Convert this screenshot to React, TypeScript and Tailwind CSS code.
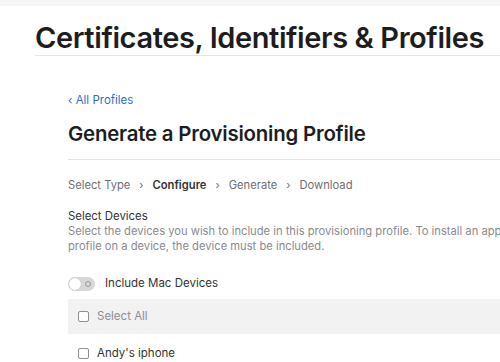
import React, { useState } from "react";

const steps = ["Select Type", "Configure", "Generate", "Download"];

const devices = ["Andy's iphone"];

export default function App() {
  const [includeMac, setIncludeMac] = useState(false);
  const [checked, setChecked] = useState<Record<string, boolean>>({});

  return (
    <div
      className="w-[500px] h-[362px] overflow-hidden bg-white text-[#1d1d1f]"
      style={{ fontFamily: "Inter, 'Noto Sans', sans-serif" }}
    >
      <div className="h-[6px] bg-[#f5f5f7]" />

      <header className="pl-[35px] pt-[15px]">
        <h1 className="text-[29px] font-semibold tracking-[-0.4px] leading-[34px] whitespace-nowrap">
          Certificates, Identifiers &amp; Profiles
        </h1>
        <div className="h-px bg-[#e5e5e5]" />
      </header>

      <main className="pl-[68px] pt-[37px]">
        <a href="#" className="text-[11.5px] text-[#2f6fce] leading-[14px] block">
          ‹ All Profiles
        </a>

        <h2 className="mt-[15px] text-[20.4px] font-semibold tracking-[-0.2px] leading-[24px] whitespace-nowrap">
          Generate a Provisioning Profile
        </h2>
        <div className="mt-[13px] h-px bg-[#e3e3e3]" />

        <nav className="mt-[18px] flex items-center text-[11.2px] leading-[14px] whitespace-nowrap">
          {steps.map((step, i) => (
            <React.Fragment key={step}>
              {i > 0 && <span className="mx-[9px] text-[#6e6e73] text-[11px]">›</span>}
              <span className={i === 1 ? "font-semibold text-[#333]" : "text-[#6e6e73]"}>
                {step}
              </span>
            </React.Fragment>
          ))}
        </nav>

        <section className="mt-[17px] text-[11.4px] leading-[15px]">
          <p className="text-[#333]">Select Devices</p>
          <p className="text-[#8a8a8e] text-[11.2px] whitespace-nowrap">
            Select the devices you wish to include in this provisioning profile. To install an app signed with this
            <br />
            profile on a device, the device must be included.
          </p>
        </section>

        <label className="mt-[21px] flex items-center gap-[10px] cursor-pointer">
          <button
            type="button"
            onClick={() => setIncludeMac(!includeMac)}
            className="relative w-[27px] h-[14px] rounded-full bg-[#d8d8d8]"
          >
            <span className="absolute left-[1px] top-[1px] w-[12px] h-[12px] rounded-full bg-white shadow-[0_0_1px_rgba(0,0,0,0.3)]" />
            <span className="absolute right-[4px] top-[4px] w-[6px] h-[6px] rounded-full border border-[#999]" />
          </button>
          <span className="text-[11.5px] text-[#333]">Include Mac Devices</span>
        </label>

        <div className="mt-[7px] h-[35px] bg-[#f2f2f2] flex items-center pl-[10px] gap-[8px]">
          <span className="w-[11px] h-[11px] rounded-[2px] border border-[#8e8e93] bg-white" />
          <span className="text-[11.5px] text-[#8e8e93]">Select All</span>
        </div>

        {devices.map((d) => (
          <div
            key={d}
            onClick={() => setChecked({ ...checked, [d]: !checked[d] })}
            className="h-[38px] flex items-center pl-[10px] gap-[8px]"
          >
            <span className="w-[11px] h-[11px] rounded-[2px] border border-[#8e8e93] bg-white" />
            <span className="text-[11.5px] text-[#333]">{d}</span>
          </div>
        ))}
      </main>
    </div>
  );
}
